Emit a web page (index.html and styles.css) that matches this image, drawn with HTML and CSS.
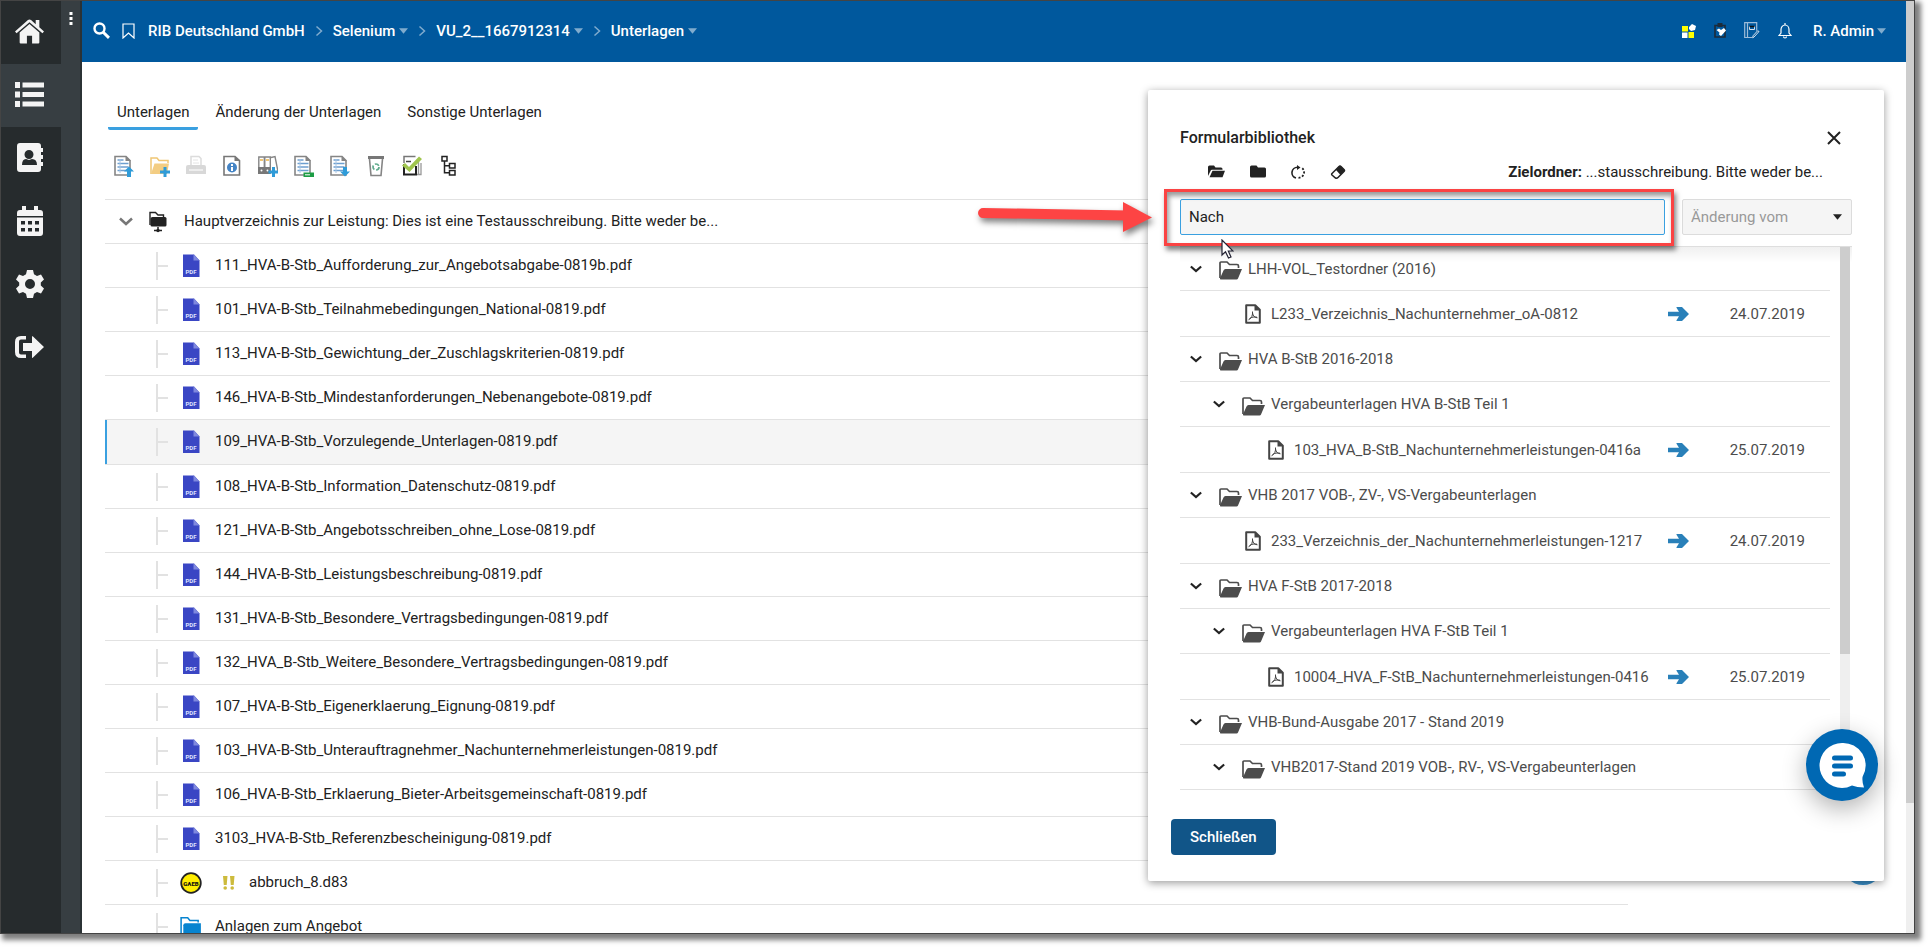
FILE: index.html
```html
<!DOCTYPE html>
<html lang="de">
<head>
<meta charset="utf-8">
<title>Unterlagen</title>
<link rel="stylesheet" href="styles.css">
</head>
<body>
<svg class="sprite" aria-hidden="true">
  <symbol id="caret" viewBox="0 0 10 6"><path d="M0 0h10L5 6z" fill="currentColor"/></symbol>
  <symbol id="sep" viewBox="0 0 8 12"><path d="M1.500 1.500L6.500 6l-5 4.500" fill="none" stroke="currentColor" stroke-width="1.500"/></symbol>
  <symbol id="chevron" viewBox="0 0 14 9"><path d="M1 1.500L7 7l6-5.500" fill="none" stroke="currentColor" stroke-width="2.500"/></symbol>
  <symbol id="pdf" viewBox="0 0 18 24">
    <path d="M1 .5h11l5.500 6V23H1z" fill="#3a46c4"/><path d="M11.500 0v6.500H17.500z" fill="#7f88de"/>
    <text x="9" y="20" text-anchor="middle" font-size="6" font-weight="700" fill="#dfe2ff" font-family="Roboto, sans-serif">PDF</text>
  </symbol>
  <symbol id="docfile" viewBox="0 0 16 20">
    <path d="M1.200 1.200h9l4.600 4.600v13H1.200z" fill="none" stroke="#444" stroke-width="2" stroke-linejoin="round"/><path d="M9.500 1v5.500H15z" fill="#444"/>
    <path d="M3.500 15.800c3-1 4.500-5 4-8.300M7.500 9c.5 3 2 4.700 5 4.800M4.500 14.500c2.500-1.500 4.500-1.800 7.500-1.300" fill="none" stroke="#444" stroke-width="1"/>
  </symbol>
  <symbol id="folder" viewBox="0 0 23 19">
    <path d="M1 17V2q0-1 1-1h6l2.500 2.500H18q1.500 0 1.500 1.500v2" fill="none" stroke="#4c4c4c" stroke-width="1.700"/>
    <path d="M6.500 8H23l-4 9.500q-.4 1-1.500 1H2q-1.500 0-1-1.300L4.500 9.500Q5 8 6.500 8z" fill="#4c4c4c"/>
  </symbol>
  <symbol id="arrow" viewBox="0 0 21 14"><path d="M0 4.700h11L8.500.8V0H14l7 7-7 7H8.500v-.8L11 9.300H0z" fill="#2980b9"/></symbol>
  <symbol id="sheet" viewBox="0 0 20 22">
    <path d="M1 1.500h11l4 4V20H1z" fill="#fff" stroke="#858585" stroke-width="1.600"/><path d="M11.500 1v5H17z" fill="#858585"/>
    <path d="M3.500 5h6M3.500 8.500h11M3.500 12h11M3.500 15.500h11" stroke="#6d9fd0" stroke-width="1.400"/><path d="M6 4v14" stroke="#a9c6e4" stroke-width="1"/>
  </symbol>
</svg>

<div class="window">
  <nav class="rail" aria-label="Hauptnavigation">
    <a class="rail-item" href="#" aria-label="Start"><svg viewBox="0 0 28 24" width="29" height="25"><path d="M14 4.800L4.500 13v9.500q0 1 1 1h6V16h5v7.500h6q1 0 1-1V13z"/><path d="M0 12L12.500 1q1.500-1.200 3 0L20 5V1h3.500v7L28 12l-1.500 1.800L14 3 1.500 13.800z"/></svg></a>
    <a class="rail-item active" href="#" aria-label="Liste"><svg viewBox="0 0 29 25" width="29" height="25"><path d="M0 0h5v6H0zM7.500.5H29v5H7.500zM0 9.500h5v6H0zM7.500 10H29v5H7.500zM0 19h5v6H0zM7.500 19.500H29v5H7.500z"/></svg></a>
    <a class="rail-item" href="#" aria-label="Kontakte"><svg viewBox="0 0 26 29" width="26" height="29"><path fill-rule="evenodd" d="M3 0h18q3 0 3 3v2h2v4h-2v3h2v4h-2v3h2v4h-2v3q0 3-3 3H3q-3 0-3-3V3Q0 0 3 0zM12 7a4.500 4.500 0 1 0 0 9 4.500 4.500 0 1 0 0-9zM5 22h15q0-6-5-6l-3 1-3-1q-4 0-4 6z"/></svg></a>
    <a class="rail-item" href="#" aria-label="Kalender"><svg viewBox="0 0 26 30" width="26" height="30"><path fill-rule="evenodd" d="M5 0h4v4h8V0h4v4h2q3 0 3 3v3H0V7q0-3 3-3h2zM0 11.500h26V27q0 3-3 3H3q-3 0-3-3zM4 15v3.500h4V15zm7 0v3.500h4V15zm7 0v3.500h4V15zM4 22v3.500h4V22zm7 0v3.500h4V22zm7 0v3.500h4V22z"/></svg></a>
    <a class="rail-item" href="#" aria-label="Einstellungen"><svg viewBox="0 0 28 28" width="28" height="28"><path fill-rule="evenodd" d="M11 0h6l1 4.200 3 1.700 4-1.400 3 5L24.800 12.500v3L28 18.500l-3 5-4-1.400-3 1.700L17 28h-6l-1-4.200-3-1.700-4 1.400-3-5 3.200-3v-3L0 9.500l3-5 4 1.400 3-1.700zM14 9a5 5 0 1 0 0 10 5 5 0 1 0 0-10z"/></svg></a>
    <a class="rail-item" href="#" aria-label="Abmelden"><svg viewBox="0 0 29 22" width="29" height="22"><path d="M11 0v3.500H6Q4 3.500 4 5.500v11q0 2 2 2h5V22H6q-6 0-6-6V6q0-6 6-6z"/><path d="M8 7h9V0q0 0 1 .5L29 11 18 21.500q-1 .5-1 .5v-7H8z"/></svg></a>
  </nav>
  <div class="strip"><svg viewBox="0 0 4 13" width="4" height="13"><path d="M.5 0h3v3h-3zM.5 5h3v3h-3zM.5 10h3v3h-3z" fill="#fff"/></svg></div>

  <div class="page">
    <header class="topbar">
      <button class="icon-btn" aria-label="Suchen"><svg viewBox="0 0 17 17" width="17" height="17"><circle cx="6.500" cy="6.500" r="5" fill="none" stroke="#fff" stroke-width="2.400"/><path d="M10 10l6 5.800" stroke="#fff" stroke-width="3"/></svg></button>
      <button class="icon-btn" aria-label="Lesezeichen"><svg viewBox="0 0 13 16" width="13" height="16"><path d="M1 1h11v14l-5.500-5L1 15z" fill="none" stroke="#fff" stroke-width="1.200"/></svg></button>
      <nav class="crumbs" aria-label="Pfad">
        <a href="#">RIB Deutschland GmbH</a>
        <svg class="sep"><use href="#sep"/></svg>
        <a href="#">Selenium<svg class="caret"><use href="#caret"/></svg></a>
        <svg class="sep"><use href="#sep"/></svg>
        <a href="#">VU_2__1667912314<svg class="caret"><use href="#caret"/></svg></a>
        <svg class="sep"><use href="#sep"/></svg>
        <a href="#">Unterlagen<svg class="caret"><use href="#caret"/></svg></a>
      </nav>
      <div class="top-actions">
        <button class="icon-btn" aria-label="Kacheln"><svg viewBox="0 0 14 14" width="14" height="14"><path d="M0 2h6v5.500H0zM6.500 8h5.500v6H6.500z" fill="#ff0"/><path d="M0 8.500h5.500V14H0zM7 3l3-3 4 2-1 4-4 1-2-2z" fill="#fff"/></svg></button>
        <button class="icon-btn" aria-label="Aufgaben"><svg viewBox="0 0 12 15" width="12" height="15"><path d="M1 2.500h10v11.500H1z" fill="none" stroke="#1c2b3a" stroke-width="1.600"/><path d="M3.500 0h5v4h-5z" fill="#1c2b3a"/><path d="M2.500 7l2.500-1.500 2 1.500 3-2 2 2.500-5 5.500-2-1.500.5-2z" fill="#fff"/></svg></button>
        <button class="icon-btn" aria-label="Notizen"><svg viewBox="0 0 16 17" width="16" height="17"><path d="M8 15.500H.7V.7h12v8M3.500.7v14.800" fill="none" stroke="#9dbcd8" stroke-width="1.200"/><path d="M5.500 4.500h5v3h-5z" fill="none" stroke="#d5e2ee"/><path d="M5.500 4.500h5" stroke="#111" stroke-width="1.500"/><path d="M15 9.500L10 15l-1.300.8.300-2 4.600-5z" fill="none" stroke="#d5e2ee"/></svg></button>
        <button class="icon-btn" aria-label="Benachrichtigungen"><svg viewBox="0 0 14 16" width="14" height="16"><path d="M1 12.500l2-2.500V6.500a4 4.500 0 0 1 8 0V10l2 2.500zM7 0v2M5.500 13.500a1.500 1.500 0 0 0 3 0" fill="none" stroke="#fff" stroke-width="1.200"/></svg></button>
        <a class="user" href="#">R. Admin<svg class="caret"><use href="#caret"/></svg></a>
      </div>
    </header>

    <main class="content">
      <nav class="tabs" aria-label="Bereiche">
        <a class="tab active" href="#">Unterlagen</a>
        <a class="tab" href="#">Änderung der Unterlagen</a>
        <a class="tab" href="#">Sonstige Unterlagen</a>
      </nav>
      <div class="tools">
        <button aria-label="Hochladen"><svg viewBox="0 0 20 22"><use href="#sheet"/><path d="M15 11.500l5 5h-3V22h-4v-5.500h-3z" fill="#2f9bd8"/></svg></button>
        <button aria-label="Neuer Ordner"><svg viewBox="0 0 20 22"><path d="M1 19V3h6l2 2.500h9V8" fill="none" stroke="#f0c674" stroke-width="1.500"/><path d="M4.500 8.500H19L17 19H1z" fill="#f3cd83"/><path d="M13.500 12h3v3.500H20v3h-3.500V22h-3v-3.500H10v-3h3.500z" fill="#2f9bd8"/></svg></button>
        <button aria-label="Drucken" disabled><svg viewBox="0 0 20 22"><path d="M5 10V1.500h8l2 2V10" fill="#fff" stroke="#dcdcdc" stroke-width="1.500"/><path d="M7 5h5M7 8h6" stroke="#e4e4e4"/><path d="M2 10h16q2 0 2 2v7H0v-7q0-2 2-2z" fill="#d8d8d8"/><path d="M3 15h14" stroke="#f4f4f4" stroke-width="1.500"/></svg></button>
        <button aria-label="Information"><svg viewBox="0 0 20 22"><path d="M2 1.500h11l4.500 4V20H2z" fill="#fff" stroke="#777" stroke-width="1.600"/><path d="M12.500 1v5H18z" fill="#777"/><circle cx="10" cy="12.500" r="5" fill="#4484c5"/><path d="M9 12h2v4H9zM9 9h2v2H9z" fill="#fff"/></svg></button>
        <button aria-label="Ordner hinzufügen"><svg viewBox="0 0 20 22"><path d="M.8 2h5.500v16H.8zM6.800 2h5.500v16H6.800zM13 2.500l4-1 3 15" fill="#fff" stroke="#858585" stroke-width="1.400"/><path d="M0 12h12.500v7H0z" fill="#777"/><path d="M2 4h3v2H2zM8 4h3v2H8z" fill="#f0c674"/><circle cx="3.500" cy="15.500" r="1" fill="#fff"/><circle cx="9.500" cy="15.500" r="1" fill="#fff"/><path d="M14 12h3v3.500h3v3h-3V22h-3v-3.500h-3.500v-3H14z" fill="#2f9bd8"/></svg></button>
        <button aria-label="Tabelle exportieren"><svg viewBox="0 0 20 22"><use href="#sheet"/><path d="M9.500 17.500H20V22H9.500z" fill="#1d9d45"/><path d="M11 19.800h5" stroke="#fff"/></svg></button>
        <button aria-label="Herunterladen"><svg viewBox="0 0 20 22"><use href="#sheet"/><path d="M13 12h4v4.500h3l-5 5-5-5h3z" fill="#2f9bd8"/></svg></button>
        <button aria-label="Papierkorb"><svg viewBox="0 0 20 22"><path d="M2 2.500h16" stroke="#777" stroke-width="3"/><path d="M3.500 4l1.500 16.500h10L16.500 4" fill="none" stroke="#858585" stroke-width="1.600"/><circle cx="10" cy="12" r="3" fill="none" stroke="#5faa8c" stroke-width="1.700" stroke-dasharray="4.500 1.800"/></svg></button>
        <button aria-label="Prüfen"><svg viewBox="0 0 20 22"><path d="M2 8V1.500h11.500" fill="none" stroke="#777" stroke-width="1.500"/><path d="M16.500 7v12.500M19 8v11.500h-4" fill="none" stroke="#999" stroke-width="1.300"/><path d="M2 9v10.500h12V11" fill="none" stroke="#222" stroke-width="2"/><path d="M4 6.500h5" stroke="#444" stroke-width="1.500"/><path d="M0 10.500L3 8l4 4L17 1.500 20 4 7.500 17z" fill="#a0c54e"/></svg></button>
        <button aria-label="Struktur"><svg viewBox="0 0 20 22"><path d="M4 1.500h5V6H4zM11.500 8.500h5.500V13h-5.500zM11.500 15.500h5.500V20h-5.500zM6.500 6v11.700h5M6.500 10.800h5" fill="none" stroke="#222" stroke-width="1.500"/></svg></button>
      </div>

      <ul class="tree">
        <li class="row root"><button class="toggle" aria-label="Zuklappen"><svg class="chev"><use href="#chevron"/></svg></button><svg class="root-icon" viewBox="0 0 18 22"><path d="M1 14V1.500h5.500L9 4h5.500v2" fill="none" stroke="#222" stroke-width="1.400"/><path d="M3.500 6H16q1.500 0 1.500 1.500V14q0 1.500-1.500 1.500H3Q1.500 15.500 1.500 14V8q0-2 2-2z" fill="#222"/><path d="M9 16v4M5 19.500h8" stroke="#222" stroke-width="1.500"/><circle cx="9" cy="19.500" r="1.700" fill="#222"/></svg><a href="#">Hauptverzeichnis zur Leistung: Dies ist eine Testausschreibung. Bitte weder be...</a></li>
        <li class="row"><i class="branch"></i><svg class="file"><use href="#pdf"/></svg><a href="#">111_HVA-B-Stb_Aufforderung_zur_Angebotsabgabe-0819b.pdf</a></li>
        <li class="row"><i class="branch"></i><svg class="file"><use href="#pdf"/></svg><a href="#">101_HVA-B-Stb_Teilnahmebedingungen_National-0819.pdf</a></li>
        <li class="row"><i class="branch"></i><svg class="file"><use href="#pdf"/></svg><a href="#">113_HVA-B-Stb_Gewichtung_der_Zuschlagskriterien-0819.pdf</a></li>
        <li class="row"><i class="branch"></i><svg class="file"><use href="#pdf"/></svg><a href="#">146_HVA-B-Stb_Mindestanforderungen_Nebenangebote-0819.pdf</a></li>
        <li class="row selected"><i class="branch"></i><svg class="file"><use href="#pdf"/></svg><a href="#">109_HVA-B-Stb_Vorzulegende_Unterlagen-0819.pdf</a></li>
        <li class="row"><i class="branch"></i><svg class="file"><use href="#pdf"/></svg><a href="#">108_HVA-B-Stb_Information_Datenschutz-0819.pdf</a></li>
        <li class="row"><i class="branch"></i><svg class="file"><use href="#pdf"/></svg><a href="#">121_HVA-B-Stb_Angebotsschreiben_ohne_Lose-0819.pdf</a></li>
        <li class="row"><i class="branch"></i><svg class="file"><use href="#pdf"/></svg><a href="#">144_HVA-B-Stb_Leistungsbeschreibung-0819.pdf</a></li>
        <li class="row"><i class="branch"></i><svg class="file"><use href="#pdf"/></svg><a href="#">131_HVA-B-Stb_Besondere_Vertragsbedingungen-0819.pdf</a></li>
        <li class="row"><i class="branch"></i><svg class="file"><use href="#pdf"/></svg><a href="#">132_HVA_B-Stb_Weitere_Besondere_Vertragsbedingungen-0819.pdf</a></li>
        <li class="row"><i class="branch"></i><svg class="file"><use href="#pdf"/></svg><a href="#">107_HVA-B-Stb_Eigenerklaerung_Eignung-0819.pdf</a></li>
        <li class="row"><i class="branch"></i><svg class="file"><use href="#pdf"/></svg><a href="#">103_HVA-B-Stb_Unterauftragnehmer_Nachunternehmerleistungen-0819.pdf</a></li>
        <li class="row"><i class="branch"></i><svg class="file"><use href="#pdf"/></svg><a href="#">106_HVA-B-Stb_Erklaerung_Bieter-Arbeitsgemeinschaft-0819.pdf</a></li>
        <li class="row"><i class="branch"></i><svg class="file"><use href="#pdf"/></svg><a href="#">3103_HVA-B-Stb_Referenzbescheinigung-0819.pdf</a></li>
        <li class="row"><i class="branch"></i><svg class="file" viewBox="0 0 22 22"><circle cx="11" cy="11" r="9.800" fill="#ffed00" stroke="#222" stroke-width="1.800"/><text x="11" y="13.500" text-anchor="middle" font-size="6" font-weight="900" fill="#111" font-family="Roboto, sans-serif">GAEB</text></svg><svg class="warn" viewBox="0 0 12 14"><path d="M0 0h4.500l-.8 9H.8zM7 0h4.500l-.8 9H7.800z" fill="#cdbb3c"/><circle cx="2.200" cy="12" r="1.800" fill="#cdbb3c"/><circle cx="9.200" cy="12" r="1.800" fill="#cdbb3c"/></svg><a href="#">abbruch_8.d83</a></li>
        <li class="row"><i class="branch"></i><svg class="file" viewBox="0 0 20 20"><path d="M1 18V1.500h6L9 4h7.500v2" fill="none" stroke="#0784d0" stroke-width="1.400"/><path d="M5 6.500h14V18H3V8.500q0-2 2-2z" fill="#0784d0"/></svg><a href="#">Anlagen zum Angebot</a></li>
      </ul>
    </main>
  </div>
  <div class="scroll page-scroll"><div class="thumb"></div></div>

  <button class="fab-back" aria-label="Hinzufügen"></button>

  <section class="panel" aria-labelledby="panel-title">
    <div class="panel-head">
      <h2 id="panel-title">Formularbibliothek</h2>
      <button class="close" aria-label="Schließen"><svg viewBox="0 0 14 14" width="14" height="14"><path d="M1 1l12 12M13 1L1 13" stroke="#222" stroke-width="2"/></svg></button>
    </div>
    <div class="panel-tools">
      <button aria-label="Alle aufklappen"><svg viewBox="0 0 17 14" width="17" height="14"><path d="M0 11V2q0-1.500 1.500-1.500H6L7.500 2.500H13q1.500 0 1.500 1.500v.8H4Q3 4.800 2.500 6z" fill="#222"/><path d="M4.500 5.800H17l-2.500 6.500H1.500z" fill="#222"/></svg></button>
      <button aria-label="Alle zuklappen"><svg viewBox="0 0 16 14" width="16" height="14"><path d="M1.500.5h5L8 2.500h6.500Q16 2.500 16 4v7q0 1.500-1.500 1.500h-13Q0 12.500 0 11V2Q0 .5 1.500.5z" fill="#222"/></svg></button>
      <button aria-label="Aktualisieren"><svg viewBox="0 0 14 14" width="14" height="14"><path d="M5 13A5.500 5.500 0 0 1 6.500 2.200" fill="none" stroke="#222" stroke-width="1.600"/><path d="M6 0l3.500 2.500L6 5z" fill="#222"/><path d="M7.500 12.800A5.500 5.500 0 0 0 11 3" fill="none" stroke="#222" stroke-width="1.800" stroke-dasharray="2 1.700"/></svg></button>
      <button aria-label="Leeren"><svg viewBox="0 0 16 14" width="16" height="14"><path d="M2 8.500l7-7q1-1 2 0L14 4.500q1 1 0 2l-6 6Q7 13.500 5.500 13L2 10q-.7-.8 0-1.500z" fill="none" stroke="#222" stroke-width="1.500"/><path d="M5.800 4.800L10 .6 15 5.500l-4.500 4.500z" fill="#222"/></svg></button>
      <p class="target"><b>Zielordner:</b> ...stausschreibung. Bitte weder be...</p>
    </div>
    <div class="filters">
      <div class="search">
        <input type="text" value="Nach" aria-label="Suche">
        <div class="mark"></div>
        <svg class="mark-arrow" viewBox="0 0 186 44"><path d="M5 16L150 18.500" stroke="#fd4444" stroke-width="10" stroke-linecap="round"/><path d="M145 5v30l29-14.500z" fill="#fd4444"/></svg>
        <svg class="cursor" viewBox="0 0 13 20"><path d="M1 1v15l3.500-3.300L7.500 19l2.500-1-2.700-6H12z" fill="#fff" stroke="#223" stroke-width="1.200"/></svg>
      </div>
      <div class="select">
        <select aria-label="Änderung vom"><option>Änderung vom</option></select>
        <svg class="caret"><use href="#caret"/></svg>
      </div>
    </div>
    <div class="results">
      <ul class="lib">
        <li class="lib-row"><button class="toggle" aria-label="Zuklappen"><svg class="chev"><use href="#chevron"/></svg></button><svg class="folder"><use href="#folder"/></svg><span>LHH-VOL_Testordner (2016)</span></li>
        <li class="lib-row doc"><svg class="docicon"><use href="#docfile"/></svg><span>L233_Verzeichnis_Nachunternehmer_oA-0812</span><button class="add" aria-label="Übernehmen"><svg><use href="#arrow"/></svg></button><time>24.07.2019</time></li>
        <li class="lib-row"><button class="toggle" aria-label="Zuklappen"><svg class="chev"><use href="#chevron"/></svg></button><svg class="folder"><use href="#folder"/></svg><span>HVA B-StB 2016-2018</span></li>
        <li class="lib-row deep"><button class="toggle" aria-label="Zuklappen"><svg class="chev"><use href="#chevron"/></svg></button><svg class="folder"><use href="#folder"/></svg><span>Vergabeunterlagen HVA B-StB Teil 1</span></li>
        <li class="lib-row doc deep"><svg class="docicon"><use href="#docfile"/></svg><span>103_HVA_B-StB_Nachunternehmerleistungen-0416a</span><button class="add" aria-label="Übernehmen"><svg><use href="#arrow"/></svg></button><time>25.07.2019</time></li>
        <li class="lib-row"><button class="toggle" aria-label="Zuklappen"><svg class="chev"><use href="#chevron"/></svg></button><svg class="folder"><use href="#folder"/></svg><span>VHB 2017 VOB-, ZV-, VS-Vergabeunterlagen</span></li>
        <li class="lib-row doc"><svg class="docicon"><use href="#docfile"/></svg><span>233_Verzeichnis_der_Nachunternehmerleistungen-1217</span><button class="add" aria-label="Übernehmen"><svg><use href="#arrow"/></svg></button><time>24.07.2019</time></li>
        <li class="lib-row"><button class="toggle" aria-label="Zuklappen"><svg class="chev"><use href="#chevron"/></svg></button><svg class="folder"><use href="#folder"/></svg><span>HVA F-StB 2017-2018</span></li>
        <li class="lib-row deep"><button class="toggle" aria-label="Zuklappen"><svg class="chev"><use href="#chevron"/></svg></button><svg class="folder"><use href="#folder"/></svg><span>Vergabeunterlagen HVA F-StB Teil 1</span></li>
        <li class="lib-row doc deep"><svg class="docicon"><use href="#docfile"/></svg><span>10004_HVA_F-StB_Nachunternehmerleistungen-0416</span><button class="add" aria-label="Übernehmen"><svg><use href="#arrow"/></svg></button><time>25.07.2019</time></li>
        <li class="lib-row"><button class="toggle" aria-label="Zuklappen"><svg class="chev"><use href="#chevron"/></svg></button><svg class="folder"><use href="#folder"/></svg><span>VHB-Bund-Ausgabe 2017 - Stand 2019</span></li>
        <li class="lib-row deep"><button class="toggle" aria-label="Zuklappen"><svg class="chev"><use href="#chevron"/></svg></button><svg class="folder"><use href="#folder"/></svg><span>VHB2017-Stand 2019 VOB-, RV-, VS-Vergabeunterlagen</span></li>
      </ul>
      <div class="scroll list-scroll"><div class="thumb"></div></div>
    </div>
    <button class="primary">Schließen</button>
  </section>

  <button class="chat" aria-label="Chat"><svg viewBox="0 0 72 72"><path d="M36 14a22.500 22.500 0 0 0 0 45q5 0 10-2.500 5 2 12 2-2-5-1.500-10.500A22.500 22.500 0 0 0 36 14z" fill="#fff"/><path d="M28.500 29h16M28.500 37h16M28.500 45h9" stroke="#0068b3" stroke-width="5" stroke-linecap="round"/></svg></button>
</div>
</body>
</html>
```

FILE: styles.css
```css
* { box-sizing: border-box; }
body {
  margin: 0;
  background: #fff;
  color: #222;
  font: 15px/20px Roboto, "Noto Sans", sans-serif;
}
a { color: inherit; text-decoration: none; }
button { padding: 0; border: 0; background: none; font: inherit; color: inherit; cursor: pointer; }
svg { display: block; flex: none; }
ul { list-style: none; margin: 0; padding: 0; }
.sprite { display: none; }

.window {
  position: relative;
  display: flex;
  height: calc(100vh - 15px);
  margin: 0 15px 15px 0;
  overflow: hidden;
  border: 1px solid #444;
  box-shadow: 4px 4px 5px 2px rgba(0, 0, 0, .5);
}

/* left navigation */
.rail { flex: none; width: 60px; background: #262b2d; }
.rail-item { display: flex; align-items: center; justify-content: center; height: 63px; padding: 0 3px 2px 0; }
.rail-item.active { width: 61px; padding-right: 4px; background: #373e42; }
.rail-item svg { fill: #f4f4f4; }
.strip { flex: none; width: 21px; padding: 11px 0 0 8px; background: #373e42; border-right: 2px solid #2b3235; }

.page { flex: 1; min-width: 0; display: flex; flex-direction: column; }
.topbar {
  flex: none;
  display: flex;
  align-items: center;
  gap: 12px;
  height: 61px;
  padding: 0 20px 2px 11px;
  background: #00589d;
  color: #fff;
  font-weight: 500;
}
.crumbs { display: flex; align-items: center; gap: 10px; padding-left: 1px; }
.crumbs a, .user { display: flex; align-items: center; gap: 4px; }
.caret { width: 9px; height: 6px; }
.topbar .caret { color: #80acce; }
.sep { width: 8px; height: 12px; color: #80acce; }
.top-actions { display: flex; align-items: center; gap: 18px; margin-left: auto; }
.user { padding-left: 3px; gap: 3px; }

.content { padding: 40px 278px 0 23px; }
.tabs { display: flex; gap: 8px; padding-left: 3px; }
.tab { padding: 0 9px 5px; border-bottom: 3px solid transparent; border-radius: 2px; }
.tab.active { border-color: #3aa0e0; }
.tools { display: flex; gap: 16px; padding: 25px 9px 22px; }
.tools button, .tools svg { width: 20px; height: 22px; }

.tree { border-top: 1px solid #e2e2e2; }
.row { display: flex; align-items: center; height: 44px; border-bottom: 1px solid #e2e2e2; white-space: nowrap; }
.row a { padding-bottom: 2px; }
.root { padding-left: 14px; }
.chev { width: 14px; height: 9px; color: #777; }
.root .toggle { margin-right: 16px; }
.root-icon { width: 18px; height: 22px; margin-right: 17px; }
.branch { width: 12px; height: 28px; margin: 0 12px 0 51px; border-left: 2px solid #e2e2e2; background: linear-gradient(#e2e2e2, #e2e2e2) center / 100% 2px no-repeat; }
.file { width: 22px; height: 24px; margin-right: 13px; }
.warn { width: 12px; height: 14px; margin: 0 14px 0 8px; }
.selected { height: 45px; background: #f5f5f5; box-shadow: inset 2px 0 #3aa0e0; }

.scroll { background: #efefef; }
.thumb { background: #cdcdcd; }
.page-scroll { flex: none; width: 8px; }
.page-scroll .thumb { height: 86%; }

/* form library */
.panel {
  position: absolute;
  top: 89px;
  right: 30px;
  width: 736px;
  padding: 38px 32px 26px;
  background: #fff;
  border-radius: 2px;
  box-shadow: 0 2px 8px rgba(0, 0, 0, .4);
}
.panel-head { display: flex; align-items: center; padding-right: 11px; }
.panel-head h2 { flex: 1; margin: 0; font-size: 16px; line-height: 20px; font-weight: 500; }
.panel-tools { display: flex; align-items: center; gap: 25px; padding: 14px 29px 0 28px; }
.target { margin: 0 0 0 auto; }
.target b { font-weight: 700; }
.filters { display: flex; gap: 17px; padding: 17px 0 11px; }
.search { position: relative; flex: 1; }
.search input, .select select {
  display: block;
  width: 100%;
  height: 36px;
  padding: 0 8px;
  border: 1px solid #3aa0e0;
  border-radius: 2px;
  background: #f5f5f5;
  color: #222;
  font: inherit;
  outline: 0;
}
.select { position: relative; width: 170px; }
.select select { appearance: none; border-color: #dcdcdc; color: #999; }
.select .caret { position: absolute; top: 15px; right: 10px; color: #222; pointer-events: none; }

.mark {
  position: absolute;
  inset: -10px -9px -11px -16px;
  border: 3px solid #fa4343;
  box-shadow: 2px 4px 5px rgba(0, 0, 0, .5), inset 2px 4px 5px rgba(0, 0, 0, .4);
  pointer-events: none;
  z-index: 2;
}
.mark-arrow { position: absolute; right: 501px; top: -2px; width: 186px; height: 44px; filter: drop-shadow(2px 4px 3px rgba(0, 0, 0, .5)); z-index: 2; }
.cursor { position: absolute; left: 41px; top: 40px; width: 13px; height: 20px; z-index: 3; }

.results { display: flex; gap: 10px; padding-right: 2px; border-top: 1px solid #dedede; background: linear-gradient(rgba(0, 0, 0, .06), transparent 16px); color: #4c4c4c; }
.lib { flex: 1; min-width: 0; }
.lib-row { display: flex; align-items: center; height: 45px; padding-left: 10px; border-bottom: 1px solid #e2e2e2; white-space: nowrap; }
.lib-row:first-child { height: 44px; }
.lib-row .chev { width: 12px; height: 8px; color: #222; }
.folder { width: 23px; height: 19px; margin: 4px 6px 0 17px; }
.lib-row.deep { padding-left: 33px; }
.lib-row.doc { height: 46px; padding-left: 65px; }
.lib-row.doc.deep { padding-left: 88px; }
.docicon { width: 16px; height: 20px; margin-right: 10px; }
.add { margin-left: auto; }
.add svg { width: 21px; height: 14px; }
.lib-row time { padding: 0 25px 0 41px; }
.list-scroll { width: 10px; }
.list-scroll .thumb { height: 75%; }
.primary {
  height: 36px;
  margin: 29px 0 0 -9px;
  padding: 0 19px;
  border-radius: 4px;
  background: #115588;
  color: #fff;
  font-weight: 500;
}

.fab-back { position: absolute; right: 30px; bottom: 48px; width: 42px; height: 42px; border-radius: 50%; background: #3a8fc8; }
.chat {
  position: absolute;
  right: 36px;
  bottom: 132px;
  width: 72px;
  height: 72px;
  border-radius: 50%;
  background: #0068b3;
  box-shadow: 0 8px 24px rgba(0, 0, 0, .3);
}
```
